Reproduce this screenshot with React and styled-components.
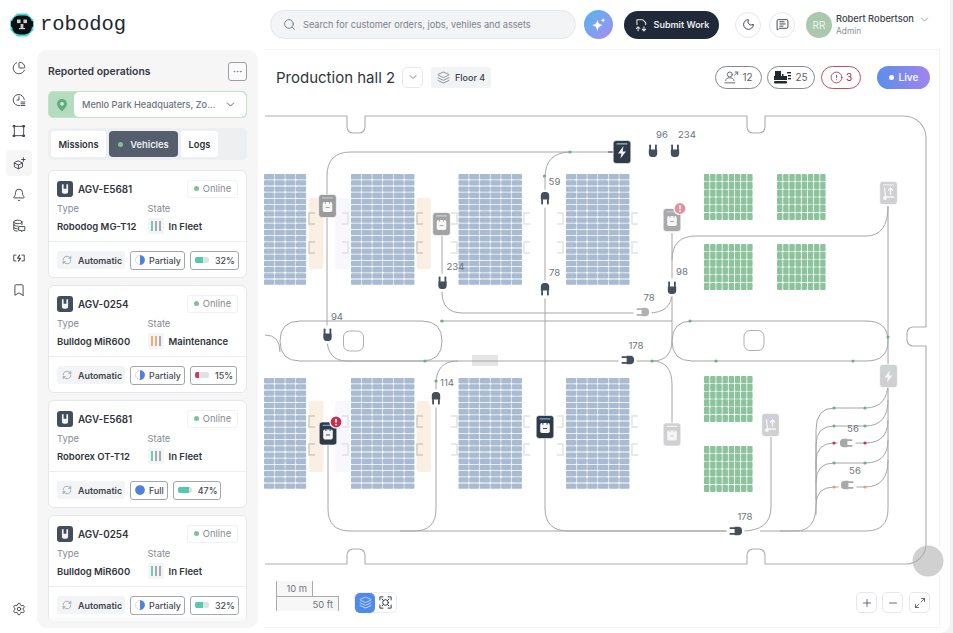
import React from "react";
import styled, { createGlobalStyle } from "styled-components";
import {
  Search,
  Moon,
  MessageSquareText,
  ChevronDown,
  Layers,
  Plus,
  Minus,
  Maximize2,
  CircleAlert,
  RefreshCw,
  ChartPie,
  Bell,
  Bookmark,
  Settings,
  MoreHorizontal,
} from "lucide-react";

const GlobalStyle = createGlobalStyle`
  html, body {
    margin: 0;
    padding: 0;
    height: 633px;
    overflow: hidden;
    background: #f3f3f4;
    font-family: "Inter", "Liberation Sans", sans-serif;
  }
  * { box-sizing: border-box; }
`;

const Shell = styled.div`
  width: 950px;
  height: 633px;
  background: #fff;
  border-radius: 0 0 10px 0;
  overflow: hidden;
  display: flex;
  flex-direction: column;
`;

/* ---------- top bar ---------- */
const TopBar = styled.header`
  height: 49px;
  flex: none;
  display: flex;
  align-items: center;
  padding: 0 0 0 10px;
`;
const Brand = styled.div`
  width: 260px;
  display: flex;
  align-items: center;
  gap: 6px;
`;
const BrandName = styled.span`
  font-family: "Liberation Mono", monospace;
  font-size: 20.5px;
  letter-spacing: 0;
  color: #23272e;
`;
const SearchBox = styled.div`
  width: 306px;
  height: 29px;
  border-radius: 15px;
  background: #f2f4f6;
  border: 1px solid #e4e7eb;
  display: flex;
  align-items: center;
  gap: 7px;
  padding-left: 12px;
  font-size: 9.2px;
  color: #7c828c;
  svg { color: #6b7280; }
`;
const AiButton = styled.div`
  width: 29px;
  height: 29px;
  margin-left: 8px;
  border-radius: 50%;
  background: linear-gradient(135deg, #52b6ee, #a98bf2);
  display: flex;
  align-items: center;
  justify-content: center;
`;
const SubmitButton = styled.div`
  width: 95px;
  height: 28px;
  margin-left: 11px;
  border-radius: 14px;
  background: #1f2937;
  color: #e9ebee;
  font-size: 9px;
  font-weight: 600;
  display: flex;
  align-items: center;
  justify-content: center;
  gap: 6px;
`;
const RoundButton = styled.div`
  width: 26px;
  height: 26px;
  margin-left: ${(p) => p.$gap}px;
  border-radius: 50%;
  border: 1px solid #e6e7ea;
  display: flex;
  align-items: center;
  justify-content: center;
  color: #2a2f38;
`;
const Avatar = styled.div`
  width: 26px;
  height: 26px;
  margin-left: 11px;
  border-radius: 50%;
  background: #a9c8ae;
  color: #eef5ee;
  font-size: 10px;
  display: flex;
  align-items: center;
  justify-content: center;
`;
const UserText = styled.div`
  margin-left: 4px;
  width: 82px;
  display: flex;
  flex-direction: column;
  gap: 2px;
`;
const UserName = styled.span`
  font-size: 9.3px;
  font-weight: 500;
  color: #3a3f47;
  white-space: nowrap;
`;
const UserRole = styled.span`
  font-size: 8.4px;
  color: #8c9199;
`;
const UserChevron = styled.span`
  display: flex;
  margin-bottom: 11px;
  color: #7a7f87;
`;

/* ---------- body ---------- */
const Body = styled.div`
  flex: 1;
  min-height: 0;
  display: flex;
  padding-bottom: 5px;
`;
const Nav = styled.nav`
  width: 37px;
  flex: none;
  display: flex;
  flex-direction: column;
  align-items: center;
  padding: 6px 0 0;
`;
const NavItem = styled.div`
  width: 26px;
  height: 26px;
  margin-bottom: 5.7px;
  border-radius: 4px;
  background: ${(p) => (p.$active ? "#f6f6f7" : "transparent")};
  color: #3f444c;
  display: flex;
  align-items: center;
  justify-content: center;
`;
const NavSpacer = styled.div`
  flex: 1;
`;

/* ---------- operations panel ---------- */
const Panel = styled.aside`
  position: relative;
  width: 221px;
  flex: none;
  margin-top: 1px;
  padding: 12px 11px 0;
  border-radius: 10px;
  background: #f6f6f7;
  overflow: hidden;
  display: flex;
  flex-direction: column;
  &::after {
    content: "";
    position: absolute;
    left: 0;
    right: 0;
    bottom: 0;
    height: 14px;
    background: linear-gradient(rgba(246, 246, 247, 0), #f6f6f7 80%);
  }
`;
const PanelHead = styled.div`
  height: 19px;
  display: flex;
  align-items: center;
  justify-content: space-between;
  font-size: 10.4px;
  font-weight: 600;
  color: #353a42;
  line-height: 21px;
`;
const DotsButton = styled.div`
  width: 19px;
  height: 19px;
  border-radius: 3px;
  border: 1px solid #9a9ea5;
  background: #fafafa;
  color: #7a7f87;
  display: flex;
  align-items: center;
  justify-content: center;
`;
const SiteSelect = styled.div`
  height: 27px;
  margin-top: 10px;
  border-radius: 5px;
  border: 1px solid #c4e2cc;
  background: #b5dcc0;
  display: flex;
  align-items: stretch;
  flex: none;
`;
const SitePin = styled.div`
  width: 25px;
  display: flex;
  align-items: center;
  justify-content: center;
`;
const SiteValue = styled.div`
  flex: 1;
  border-radius: 5px;
  background: #fff;
  display: flex;
  align-items: center;
  justify-content: space-between;
  padding: 0 9px 0 8px;
  font-size: 9.2px;
  font-weight: 500;
  color: #6d727b;
  white-space: nowrap;
  svg { color: #3f444c; }
`;
const Tabs = styled.div`
  height: 32px;
  margin-top: 10px;
  flex: none;
  padding: 3px;
  border-radius: 5px;
  background: #eeeff1;
  display: flex;
  gap: 3px;
`;
const Tab = styled.div`
  width: ${(p) => p.$w}px;
  border-radius: 4px;
  background: ${(p) => (p.$active ? "#545e6c" : "#fff")};
  color: ${(p) => (p.$active ? "#eef0f2" : "#2e333b")};
  font-size: 9.3px;
  font-weight: 600;
  display: flex;
  align-items: center;
  justify-content: center;
  gap: 7px;
`;
const TabDot = styled.span`
  width: 5px;
  height: 5px;
  border-radius: 50%;
  background: #7fc29a;
`;
const CardList = styled.div`
  margin-top: 10px;
  display: flex;
  flex-direction: column;
  gap: 7px;
`;
const Card = styled.article`
  height: 108px;
  flex: none;
  border-radius: 6px;
  border: 1px solid #e6e7ea;
  background: #fff;
  display: flex;
  flex-direction: column;
`;
const CardTop = styled.div`
  height: 71px;
  flex: none;
  padding: 8px 8px 0 8px;
  border-bottom: 1px solid #eceded;
`;
const CardTitleRow = styled.div`
  height: 19px;
  display: flex;
  align-items: center;
  justify-content: space-between;
`;
const CardTitle = styled.div`
  display: flex;
  align-items: center;
  gap: 5px;
  font-size: 9.9px;
  font-weight: 600;
  color: #2f343c;
`;
const VehicleIcon = styled.div`
  width: 16px;
  height: 16px;
  border-radius: 3px;
  background: #434d5c;
  display: flex;
  align-items: center;
  justify-content: center;
`;
const OnlineBadge = styled.div`
  width: 51px;
  height: 18px;
  border-radius: 3px;
  border: 1px solid #f0f1f2;
  display: flex;
  align-items: center;
  justify-content: center;
  gap: 4px;
  font-size: 9.4px;
  color: #868b93;
`;
const GreenDot = styled.span`
  width: 5px;
  height: 5px;
  border-radius: 50%;
  background: #7fc29a;
`;
const InfoGrid = styled.div`
  margin-top: 2px;
  display: grid;
  grid-template-columns: 90.5px 1fr;
  grid-template-rows: 16px 20px;
  align-items: center;
`;
const InfoLabel = styled.span`
  font-size: 9.4px;
  color: #868b93;
`;
const InfoValue = styled.div`
  display: flex;
  align-items: center;
  gap: 5px;
  font-size: 9.5px;
  font-weight: 600;
  color: #30353d;
  white-space: nowrap;
`;
const StateBars = styled.span`
  width: 16px;
  height: 16px;
  border-radius: 2px;
  background: #f3f4f5;
  display: flex;
  align-items: center;
  justify-content: center;
  gap: 2px;
`;
const StateBar = styled.i`
  width: 2px;
  height: 10px;
  background: ${(p) => p.$color};
`;
const CardFoot = styled.div`
  flex: 1;
  padding: 1px 8px 0;
  display: flex;
  align-items: center;
  gap: 5px;
`;
const ModeChip = styled.div`
  width: 68px;
  height: 18px;
  flex: none;
  border-radius: 3px;
  background: #f3f4f6;
  display: flex;
  align-items: center;
  gap: 6px;
  padding-left: 5px;
  font-size: 8.9px;
  font-weight: 600;
  color: #3f444c;
  svg { color: #80858d; }
`;
const OutlineChip = styled.div`
  height: 19px;
  flex: none;
  padding: 0 3px;
  border-radius: 3px;
  border: 1px solid #a3a7ad;
  display: flex;
  align-items: center;
  gap: 3px;
  font-size: 8.9px;
  font-weight: 500;
  color: #454a52;
  white-space: nowrap;
`;
const BatteryTrack = styled.span`
  width: 14px;
  height: 6px;
  margin: 0 3px 0 1px;
  border-radius: 2px;
  background: #dfe2e5;
  overflow: hidden;
  display: block;
`;
const BatteryFill = styled.span`
  height: 100%;
  display: block;
  background: ${(p) => p.$color};
`;

/* ---------- main map area ---------- */
const Main = styled.main`
  flex: none;
  width: 675px;
  margin-left: 7px;
  margin-top: 0;
  border-top: 1px solid #f3f3f4;
  border-right: 1px solid #f3f3f4;
  border-bottom: 1px solid #f3f3f4;
  display: flex;
  flex-direction: column;
`;
const MainHead = styled.div`
  height: 50px;
  flex: none;
  display: flex;
  align-items: center;
  padding: 4px 9px 0 11px;
`;
const HallTitle = styled.h1`
  margin: 0;
  font-size: 15px;
  font-weight: 400;
  color: #30353d;
`;
const HallPicker = styled.div`
  width: 21px;
  height: 21px;
  margin-left: 7px;
  border-radius: 5px;
  border: 1px solid #e6e7ea;
  color: #555a62;
  display: flex;
  align-items: center;
  justify-content: center;
`;
const FloorChip = styled.div`
  width: 60px;
  height: 21px;
  margin-left: 8px;
  border-radius: 3px;
  background: #f2f3f5;
  font-size: 9px;
  font-weight: 500;
  color: #3a3f47;
  display: flex;
  align-items: center;
  justify-content: center;
  gap: 5px;
  svg { color: #6f747c; }
`;
const HeadSpacer = styled.div`
  flex: 1;
`;
const CountChip = styled.div`
  width: ${(p) => p.$w}px;
  height: 23px;
  margin-left: ${(p) => p.$gap || 5}px;
  border-radius: 12px;
  border: 1px solid ${(p) => (p.$alert ? "#b9506a" : "#85898f")};
  color: ${(p) => (p.$alert ? "#9c2d4a" : "#5d626a")};
  font-size: 10px;
  display: flex;
  align-items: center;
  justify-content: center;
  gap: 3px;
`;
const LiveChip = styled.div`
  width: 53px;
  height: 23px;
  margin-left: 16px;
  border-radius: 12px;
  background: linear-gradient(90deg, #5a8fec, #a184ee);
  color: #f3f4ff;
  font-size: 10px;
  font-weight: 600;
  display: flex;
  align-items: center;
  justify-content: center;
  gap: 5px;
`;
const LiveDot = styled.span`
  width: 5px;
  height: 5px;
  border-radius: 50%;
  background: #fff;
`;
const MapSvg = styled.svg`
  display: block;
  flex: none;
  overflow: visible;
`;
const MapLabel = styled.text`
  font-family: "Inter", "Liberation Sans", sans-serif;
  font-size: 9.6px;
  fill: #6f747b;
  text-anchor: middle;
`;
const MainFoot = styled.div`
  flex: 1;
  display: flex;
  align-items: flex-start;
  padding: 1px 9px 0 11px;
`;
const ScaleBox = styled.div`
  width: 63px;
  height: 31px;
  display: flex;
  flex-direction: column;
`;
const ScaleTop = styled.div`
  width: 37px;
  height: 16px;
  border-left: 1px solid #aaa;
  border-right: 1px solid #aaa;
  border-bottom: 1px solid #aaa;
  background: #f7f7f8;
  font-size: 9.4px;
  color: #6f747b;
  display: flex;
  align-items: center;
  justify-content: flex-end;
  padding-right: 5px;
`;
const ScaleBottom = styled.div`
  width: 63px;
  height: 15px;
  margin-top: -1px;
  border-left: 1px solid #aaa;
  border-right: 1px solid #aaa;
  border-top: 1px solid #aaa;
  background: #f7f7f8;
  font-size: 9.4px;
  color: #6f747b;
  display: flex;
  align-items: center;
  justify-content: flex-end;
  padding-right: 5px;
`;
const ViewToggle = styled.div`
  width: 43px;
  height: 21px;
  margin-left: 15px;
  margin-top: 11px;
  border-radius: 5px;
  border: 1px solid #eceded;
  display: flex;
  align-items: center;
`;
const ViewButton = styled.div`
  width: 20px;
  height: 20px;
  border-radius: 5px;
  background: ${(p) => (p.$active ? "#4f8ae8" : "transparent")};
  color: ${(p) => (p.$active ? "#cfe0fa" : "#3a3f47")};
  display: flex;
  align-items: center;
  justify-content: center;
`;
const ZoomButton = styled.div`
  width: 21px;
  height: 21px;
  margin-left: ${(p) => p.$gap}px;
  margin-top: 11px;
  border-radius: 5px;
  border: 1px solid #e6e7ea;
  color: #3a3f47;
  display: flex;
  align-items: center;
  justify-content: center;
`;

/* ---------- small drawn icons ---------- */
const Stroke = ({ size = 14, children }) => (
  <svg width={size} height={size} viewBox="0 0 24 24" fill="none" stroke="currentColor" strokeWidth="1.6" strokeLinecap="round" strokeLinejoin="round">
    {children}
  </svg>
);

const LogoMark = () => (
  <svg width="24" height="24" viewBox="0 0 24 24">
    <path d="M7 0.5H17L23.5 7V17L17 23.5H7L0.5 17V7Z" fill="#41dccf" />
    <rect x="2.2" y="2.4" width="19.6" height="19" rx="7" fill="#0d0f12" />
    <rect x="0.8" y="8" width="22.4" height="6" rx="1" fill="#0d0f12" />
    <rect x="7" y="6.5" width="3.6" height="3.6" fill="#c5cdd0" />
    <rect x="13.4" y="6.5" width="3.6" height="3.6" fill="#c5cdd0" />
    <rect x="10.6" y="11" width="2.8" height="5" fill="#c5cdd0" />
    <rect x="9" y="15" width="6" height="1.2" fill="#c5cdd0" />
  </svg>
);

const PinIcon = () => (
  <svg width="14" height="14" viewBox="0 0 24 24">
    <path d="M12 1.5C7 1.5 3.5 5.3 3.5 10C3.5 15.5 9 20 12 23C15 20 20.5 15.5 20.5 10C20.5 5.3 17 1.5 12 1.5Z" fill="#5fae7e" />
    <circle cx="12" cy="10" r="3.2" fill="#d4ecdb" />
  </svg>
);
const ClockListIcon = () => (
  <Stroke>
    <path d="M13 21.5A9.5 9.5 0 1 1 21 11" />
    <path d="M12 6.5V12H8.5" />
    <path d="M15.5 15.5H22M15.5 18.5H22M15.5 21.5H22" />
  </Stroke>
);
const NodesIcon = () => (
  <Stroke>
    <path d="M6 4H18M6 20H18M4 6V18M20 6V18" />
    <rect x="2.5" y="2.5" width="2.6" height="2.6" fill="currentColor" />
    <rect x="18.9" y="2.5" width="2.6" height="2.6" fill="currentColor" />
    <rect x="2.5" y="18.9" width="2.6" height="2.6" fill="currentColor" />
    <rect x="18.9" y="18.9" width="2.6" height="2.6" fill="currentColor" />
  </Stroke>
);
const CubePlusIcon = () => (
  <Stroke>
    <path d="M11 8.5L18 12V18.5L11 22L4 18.5V12Z" />
    <path d="M4 12L11 15.5L18 12M11 15.5V22" />
    <path d="M19.5 3V9M16.5 6H22.5" />
  </Stroke>
);
const DataIcon = () => (
  <Stroke>
    <ellipse cx="10" cy="5" rx="7" ry="3" />
    <path d="M3 5V18C3 19.5 5.5 20.5 9 20.8M17 5V10M3 9.5C3 11 6 12.2 10 12.2M3 14C3 15.5 5.5 16.7 9 16.8" />
    <path d="M12 13H22V19.5H18.5L16.5 22V19.5H12Z" />
  </Stroke>
);
const BracketBoltIcon = () => (
  <Stroke>
    <path d="M7 7H3V17H7M17 7H21V17H17" />
    <path d="M13 7L9.5 12.5H14.5L11 17.5" strokeWidth="2" />
  </Stroke>
);
const SubmitIcon = () => (
  <svg width="14" height="14" viewBox="0 0 24 24" fill="none" stroke="#e9ebee" strokeWidth="1.8" strokeLinecap="round" strokeLinejoin="round">
    <path d="M5 11V3H15L20 8V11" />
    <path d="M7 22V15M4 18L7 15L10 18" />
    <path d="M17 15V22M14 19L17 22L20 19" />
  </svg>
);
const SparkIcon = () => (
  <svg width="17" height="17" viewBox="0 0 24 24" fill="#fff">
    <path d="M10.5 5C11.5 10 13 12 18 13C13 14 11.5 16 10.5 21.5C9.5 16 8 14 3 13C8 12 9.5 10 10.5 5Z" />
    <path d="M18.5 2.5C19 5 19.5 5.5 22 6C19.5 6.5 19 7 18.5 9.5C18 7 17.5 6.5 15 6C17.5 5.5 18 5 18.5 2.5Z" />
  </svg>
);
const ForkIcon = () => (
  <svg width="14" height="14" viewBox="0 0 10 10">
    <path d="M2.8 1.6H4V4.8H6V1.6H7.2V6.8C7.2 7.8 6.6 8.4 5.6 8.4H4.4C3.4 8.4 2.8 7.8 2.8 6.8Z" fill="#f2f3f5" />
  </svg>
);
const CoverageIcon = ({ full }) => (
  <svg width="12" height="12" viewBox="0 0 16 16">
    {full ? (
      <circle cx="8" cy="8" r="6.5" fill="#4f80dc" />
    ) : (
      <>
        <circle cx="8" cy="8" r="6" fill="none" stroke="#9dbbee" strokeWidth="1.3" strokeDasharray="1.6 1.4" />
        <path d="M8 1.5A6.5 6.5 0 0 1 8 14.5Z" fill="#4f80dc" />
      </>
    )}
  </svg>
);
const FleetIcon = () => (
  <svg width="18" height="14" viewBox="0 0 18 14" fill="#24282f">
    <rect x="1" y="1" width="6" height="5" />
    <rect x="0" y="6" width="13" height="4" />
    <rect x="8" y="4" width="1.5" height="2" />
    <rect x="13" y="2" width="4" height="1.4" />
    <rect x="14" y="5" width="3" height="1.4" />
    <rect x="14" y="8" width="3" height="1.4" />
    <rect x="0" y="11" width="13" height="2.4" rx="1.2" />
  </svg>
);
const PersonArrowIcon = () => (
  <svg width="15" height="14" viewBox="0 0 18 16" fill="none" stroke="#6a6f76" strokeWidth="1.2" strokeLinecap="round">
    <circle cx="7" cy="5" r="3" />
    <path d="M2 12.2C2 10 4 9 7 9C10 9 12 10 12 12.2" />
    <path d="M1 15H13" />
    <path d="M12.5 6L16.5 2M13.5 2H16.5V5" />
  </svg>
);
const FocusIcon = () => (
  <Stroke size={15}>
    <path d="M3 8V3H8M16 3H21V8M21 16V21H16M8 21H3V16" />
    <circle cx="12" cy="12" r="4.5" />
    <path d="M6.5 6.5L9 9M17.5 6.5L15 9M6.5 17.5L9 15M17.5 17.5L15 15" />
  </Stroke>
);

/* ---------- map pieces ---------- */
const Shelves = ({ x, y, cols, rows = 18, color = "#a9bbd0" }) => {
  const cells = [];
  for (let r = 0; r < rows; r++) {
    for (let c = 0; c < cols; c++) {
      cells.push(<rect key={`${r}-${c}`} x={x + c * 10.67} y={y + r * 6.2} width={10.1} height={5.4} rx={0.8} fill={color} />);
    }
  }
  return <g>{cells}</g>;
};

const GreenRack = ({ x, y }) => {
  const cells = [];
  for (let r = 0; r < 6; r++) {
    for (let c = 0; c < 8; c++) {
      cells.push(<rect key={`${r}-${c}`} x={x + c * 6.17} y={y + r * 7.78} width={5.4} height={7.2} rx={1} fill="#8cc39c" />);
    }
  }
  return <g>{cells}</g>;
};

const Bracket = ({ x, y, right, color = "#e2e2e2" }) => (
  <path
    d={right ? `M${x} ${y}h6v11h-6` : `M${x + 6} ${y}h-6v11h6`}
    fill="none"
    stroke={color}
    strokeWidth="1.4"
  />
);

const Plug = ({ x, y, rot = 0, color = "#444e5c" }) => (
  <g transform={`translate(${x} ${y}) rotate(${rot})`}>
    <rect x="-6.5" y="-9.5" width="13" height="18" rx="4" fill="#fff" />
    <rect x="-3.8" y="-6.4" width="1.8" height="5.5" rx="0.6" fill={color} />
    <rect x="2" y="-6.4" width="1.8" height="5.5" rx="0.6" fill={color} />
    <path d="M-4.2 -1.4H4.2V2.4C4.2 4.6 2.8 6 1 6H-1C-2.8 6 -4.2 4.6 -4.2 2.4Z" fill={color} />
  </g>
);

const Station = ({ x, y, fill, bar, kind = "box", alert }) => (
  <g transform={`translate(${x} ${y})`}>
    <rect x="-8.8" y="-11.5" width="17.6" height="23" rx="3" fill={fill} stroke="#fff" strokeWidth="0.6" />
    <rect x="-5.5" y="-8.7" width="11" height="1.1" rx="0.5" fill={bar} />
    {kind === "box" && (
      <g>
        <rect x="-4.8" y="-4" width="9.6" height="10" rx="1.8" fill="#f6f6f6" />
        <rect x="-2" y="1" width="4" height="0.9" fill={fill} />
        <rect x="-2.6" y="-4" width="1" height="1.6" fill={fill} />
        <rect x="1.6" y="-4" width="1" height="1.6" fill={fill} />
      </g>
    )}
    {kind === "bolt" && <path d="M1.5 -6L-4 1.5H-0.6L-1.6 6.5L4 -0.6H0.6Z" fill="#f6f6f6" />}
    {kind === "scooter" && (
      <g fill="none" stroke="#f6f6f6" strokeWidth="1.3" strokeLinecap="round">
        <path d="M-4 -5L-3 3" />
        <path d="M-3 4H5" />
        <circle cx="-3.6" cy="5" r="1.3" fill="#f6f6f6" />
        <path d="M2 1V-5M0 -3L2 -5L4 -3" />
      </g>
    )}
    {alert && (
      <g transform="translate(8 -11.5)">
        <circle r="6.6" fill="#fff" />
        <circle r="5.4" fill={alert} />
        <rect x="-0.8" y="-3.3" width="1.6" height="4" rx="0.7" fill="#fff" />
        <circle cy="2.6" r="0.9" fill="#fff" />
      </g>
    )}
  </g>
);

const greenDots = [
  [570, 152], [544.5, 176], [442, 321], [425, 361], [690, 321], [888, 337], [652, 361],
  [716, 361], [853, 361], [436, 381], [834, 408], [865, 408], [834, 426], [865, 426],
  [834, 463], [865, 463],
];
const bracketRowsX = [
  [309, false, "#cfc9c0"], [342, true], [417, false, "#cfc9c0"], [451, true],
  [524, false], [557, true], [632, false],
];
const routes = [
  "M327 340V176Q327 152 351 152H614",
  "M571 152Q545 152 545 178V508Q545 531 568 531H730",
  "M300 321H422Q442 321 442 341T422 361H347Q327 361 327 338",
  "M300 321Q280 321 280 341T300 361H425",
  "M265 335Q280 335 280 352",
  "M442 236V292Q442 313 463 313H638",
  "M648 313Q672 313 672 292",
  "M672 233V340Q672 361 652 361H635",
  "M440 321H672",
  "M672 260Q672 236 696 236H866Q888 236 888 206",
  "M692 321H866Q888 321 888 341T866 361H692Q672 361 672 341T692 321",
  "M425 361H620",
  "M652 361Q672 361 672 385V424",
  "M436 392V384Q436 361 458 361",
  "M328 445V509Q328 531 350 531H414Q436 531 436 509V404",
  "M400 531H730",
  "M742 531Q771 531 771 507V437",
  "M760 531H866Q888 531 888 509V206",
  "M780 531H796Q816 531 816 505V430Q816 408 834 408H865Q888 408 888 382",
  "M816 470V445Q816 426 834 426H865Q888 426 888 400",
  "M816 482V462Q816 443 834 443H865Q888 443 888 420",
  "M816 500V482Q816 463 834 463H865Q888 463 888 440",
  "M816 515V505Q816 487 834 487H865Q888 487 888 460",
];
const wall =
  "M265 116H347V127a6 6 0 0 0 6 6h6a6 6 0 0 0 6-6V116H747V127a6 6 0 0 0 6 6h6a6 6 0 0 0 6-6V116H904a22 22 0 0 1 22 22V327H913a6 6 0 0 0-6 6v7a6 6 0 0 0 6 6H926V544a20 20 0 0 1-20 20H765V555a6 6 0 0 0-6-6h-6a6 6 0 0 0-6 6V564H365V555a6 6 0 0 0-6-6h-6a6 6 0 0 0-6 6V564H265";

const FloorMap = () => (
  <MapSvg width="675" height="480" viewBox="265 100 675 480">
    {[174, 378].map((y) => (
      <g key={y}>
        <Shelves x={264} y={y} cols={4} />
        <Shelves x={351} y={y} cols={6} />
        <Shelves x={458.5} y={y} cols={6} />
        <Shelves x={566} y={y} cols={6} />
      </g>
    ))}
    {[198, 401].map((y) => (
      <g key={y}>
        <rect x="309" y={y} width="14.5" height="71" rx="2" fill="#f9f0e3" />
        <rect x="335" y={y} width="15" height="71" rx="2" fill="#f7f7fe" />
        <rect x="416.5" y={y} width="14.5" height="71" rx="2" fill="#f9f0e3" />
      </g>
    ))}
    {[213, 242, 416, 444].map((y) =>
      bracketRowsX.map(([x, right, color]) => (
        <Bracket key={`${x}-${y}`} x={x} y={y} right={right} color={color} />
      ))
    )}
    <GreenRack x={704} y={174} />
    <GreenRack x={777} y={174} />
    <GreenRack x={704} y={244} />
    <GreenRack x={777} y={244} />
    <GreenRack x={704} y={376} />
    <GreenRack x={704} y={446} />

    <rect x="472" y="355" width="26" height="11" fill="#e6e6e6" />
    <rect x="343.5" y="331" width="20" height="20" rx="6" fill="#fff" stroke="#b0b0b0" strokeWidth="1" />
    <rect x="744" y="330.5" width="20" height="20" rx="6" fill="#fff" stroke="#b0b0b0" strokeWidth="1" />

    <g fill="none" stroke="#a6a6a6" strokeWidth="1">
      {routes.map((d) => (
        <path key={d} d={d} />
      ))}
      <path d="M608 152H614" stroke="#444" />
    </g>

    <circle cx="928" cy="561" r="17" fill="#d0d0d0" stroke="#fff" strokeWidth="3" />
    <path d={wall} fill="none" stroke="#adadad" strokeWidth="1.1" />

    {greenDots.map(([x, y]) => (
      <circle key={`${x}-${y}`} cx={x} cy={y} r="1.6" fill="#66b384" />
    ))}
    <circle cx="834" cy="443" r="1.6" fill="#cf2f55" />
    <circle cx="865" cy="443" r="1.6" fill="#cf2f55" />
    <circle cx="834" cy="487" r="1.6" fill="#f0a060" />
    <circle cx="865" cy="487" r="1.6" fill="#f0a060" />

    <Station x={327.5} y={206} fill="#9b9b9b" bar="#b9c8da" />
    <Station x={441.5} y={224} fill="#a3a3a3" bar="#c4d0de" />
    <Station x={622} y={152} fill="#303a48" bar="#8cc8b4" kind="bolt" />
    <Station x={672} y={220} fill="#a8a8a8" bar="#bccbe0" alert="#e0929f" />
    <Station x={888.5} y={193} fill="#d0d0d2" bar="#eceef0" kind="scooter" />
    <Station x={888.5} y={376} fill="#d0d0d2" bar="#bfe0d3" kind="bolt" />
    <Station x={328} y={433.5} fill="#303a48" bar="#60a0ee" alert="#c72f50" />
    <Station x={545} y={427} fill="#303a48" bar="#70b0ee" />
    <Station x={672} y={434.5} fill="#d0d0d2" bar="#eceef0" />
    <Station x={770.5} y={425} fill="#d0d0d2" bar="#cfc8f0" kind="scooter" />

    <Plug x={442.5} y={283} />
    <Plug x={327.5} y={335} />
    <Plug x={545} y={198} rot={180} />
    <Plug x={545} y={289} rot={180} />
    <Plug x={653} y={151} />
    <Plug x={675} y={151} />
    <Plug x={672} y={288} />
    <Plug x={643} y={312} rot={-90} color="#b0b0b0" />
    <Plug x={628} y={360} rot={-90} />
    <Plug x={436} y={398} rot={180} />
    <Plug x={736} y={531} rot={-90} />
    <Plug x={846} y={443} rot={90} color="#a8a8a8" />
    <Plug x={847} y={485} rot={90} color="#a8a8a8" />

    <MapLabel x="337" y="320">94</MapLabel>
    <MapLabel x="455.5" y="270">234</MapLabel>
    <MapLabel x="554.5" y="185">59</MapLabel>
    <MapLabel x="554.5" y="276">78</MapLabel>
    <MapLabel x="662" y="138">96</MapLabel>
    <MapLabel x="687" y="138">234</MapLabel>
    <MapLabel x="682" y="275">98</MapLabel>
    <MapLabel x="649" y="301">78</MapLabel>
    <MapLabel x="636" y="349">178</MapLabel>
    <MapLabel x="447" y="385.5">114</MapLabel>
    <MapLabel x="745" y="520">178</MapLabel>
    <MapLabel x="853" y="432">56</MapLabel>
    <MapLabel x="855" y="474">56</MapLabel>
  </MapSvg>
);

/* ---------- cards ---------- */
const vehicles = [
  { id: "AGV-E5681", type: "Robodog MG-T12", state: "In Fleet", mode: "Partialy", battery: 32 },
  { id: "AGV-0254", type: "Bulldog MiR600", state: "Maintenance", mode: "Partialy", battery: 15 },
  { id: "AGV-E5681", type: "Roborex OT-T12", state: "In Fleet", mode: "Full", battery: 47 },
  { id: "AGV-0254", type: "Bulldog MiR600", state: "In Fleet", mode: "Partialy", battery: 32 },
];

const VehicleCard = ({ id, type, state, mode, battery }) => {
  const fleet = state === "In Fleet";
  return (
    <Card>
      <CardTop>
        <CardTitleRow>
          <CardTitle>
            <VehicleIcon>
              <ForkIcon />
            </VehicleIcon>
            {id}
          </CardTitle>
          <OnlineBadge>
            <GreenDot />
            Online
          </OnlineBadge>
        </CardTitleRow>
        <InfoGrid>
          <InfoLabel>Type</InfoLabel>
          <InfoLabel>State</InfoLabel>
          <InfoValue>{type}</InfoValue>
          <InfoValue>
            <StateBars>
              <StateBar $color={fleet ? "#6ccdb4" : "#f2ac7c"} />
              <StateBar $color={fleet ? "#a6abb2" : "#f2ac7c"} />
              <StateBar $color="#a6abb2" />
            </StateBars>
            {state}
          </InfoValue>
        </InfoGrid>
      </CardTop>
      <CardFoot>
        <ModeChip>
          <RefreshCw size={10} strokeWidth={1.5} />
          Automatic
        </ModeChip>
        <OutlineChip>
          <CoverageIcon full={mode === "Full"} />
          {mode}
        </OutlineChip>
        <OutlineChip>
          <BatteryTrack>
            <BatteryFill $color={battery < 20 ? "#cf3a5c" : "#55c9ad"} style={{ width: `${Math.max(battery * 1.7, 30)}%` }} />
          </BatteryTrack>
          {battery}%
        </OutlineChip>
      </CardFoot>
    </Card>
  );
};

export default function App() {
  return (
    <>
      <GlobalStyle />
      <Shell>
        <TopBar>
          <Brand>
            <LogoMark />
            <BrandName>robodog</BrandName>
          </Brand>
          <SearchBox>
            <Search size={13} strokeWidth={1.6} />
            Search for customer orders, jobs, vehiles and assets
          </SearchBox>
          <AiButton>
            <SparkIcon />
          </AiButton>
          <SubmitButton>
            <SubmitIcon />
            Submit Work
          </SubmitButton>
          <RoundButton $gap={16}>
            <Moon size={13} strokeWidth={1.6} />
          </RoundButton>
          <RoundButton $gap={8}>
            <MessageSquareText size={13} strokeWidth={1.6} />
          </RoundButton>
          <Avatar>RR</Avatar>
          <UserText>
            <UserName>Robert Robertson</UserName>
            <UserRole>Admin</UserRole>
          </UserText>
          <UserChevron>
            <ChevronDown size={13} strokeWidth={1.3} />
          </UserChevron>
        </TopBar>
        <Body>
          <Nav>
            <NavItem><ChartPie size={14} strokeWidth={1.6} /></NavItem>
            <NavItem><ClockListIcon /></NavItem>
            <NavItem><NodesIcon /></NavItem>
            <NavItem $active><CubePlusIcon /></NavItem>
            <NavItem><Bell size={14} strokeWidth={1.6} /></NavItem>
            <NavItem><DataIcon /></NavItem>
            <NavItem><BracketBoltIcon /></NavItem>
            <NavItem><Bookmark size={14} strokeWidth={1.6} /></NavItem>
            <NavSpacer />
            <NavItem><Settings size={14} strokeWidth={1.6} /></NavItem>
          </Nav>
          <Panel>
            <PanelHead>
              Reported operations
              <DotsButton>
                <MoreHorizontal size={11} strokeWidth={1.5} />
              </DotsButton>
            </PanelHead>
            <SiteSelect>
              <SitePin>
                <PinIcon />
              </SitePin>
              <SiteValue>
                Menlo Park Headquaters, Zo...
                <ChevronDown size={13} strokeWidth={1.5} />
              </SiteValue>
            </SiteSelect>
            <Tabs>
              <Tab $w={55}>Missions</Tab>
              <Tab $w={69} $active>
                <TabDot />
                Vehicles
              </Tab>
              <Tab $w={37}>Logs</Tab>
            </Tabs>
            <CardList>
              {vehicles.map((v, i) => (
                <VehicleCard key={i} {...v} />
              ))}
            </CardList>
          </Panel>
          <Main>
            <MainHead>
              <HallTitle>Production hall 2</HallTitle>
              <HallPicker>
                <ChevronDown size={12} strokeWidth={1.5} />
              </HallPicker>
              <FloorChip>
                <Layers size={13} strokeWidth={1.4} />
                Floor 4
              </FloorChip>
              <HeadSpacer />
              <CountChip $w={47}>
                <PersonArrowIcon />
                12
              </CountChip>
              <CountChip $w={48}>
                <FleetIcon />
                25
              </CountChip>
              <CountChip $w={40} $gap={6} $alert>
                <CircleAlert size={13} strokeWidth={1.5} />
                3
              </CountChip>
              <LiveChip>
                <LiveDot />
                Live
              </LiveChip>
            </MainHead>
            <FloorMap />
            <MainFoot>
              <ScaleBox>
                <ScaleTop>10 m</ScaleTop>
                <ScaleBottom>50 ft</ScaleBottom>
              </ScaleBox>
              <ViewToggle>
                <ViewButton $active>
                  <Layers size={13} strokeWidth={1.6} />
                </ViewButton>
                <ViewButton>
                  <FocusIcon />
                </ViewButton>
              </ViewToggle>
              <HeadSpacer />
              <ZoomButton $gap={0}>
                <Plus size={12} strokeWidth={1.5} />
              </ZoomButton>
              <ZoomButton $gap={5}>
                <Minus size={12} strokeWidth={1.5} />
              </ZoomButton>
              <ZoomButton $gap={6}>
                <Maximize2 size={12} strokeWidth={1.5} />
              </ZoomButton>
            </MainFoot>
          </Main>
        </Body>
      </Shell>
    </>
  );
}
